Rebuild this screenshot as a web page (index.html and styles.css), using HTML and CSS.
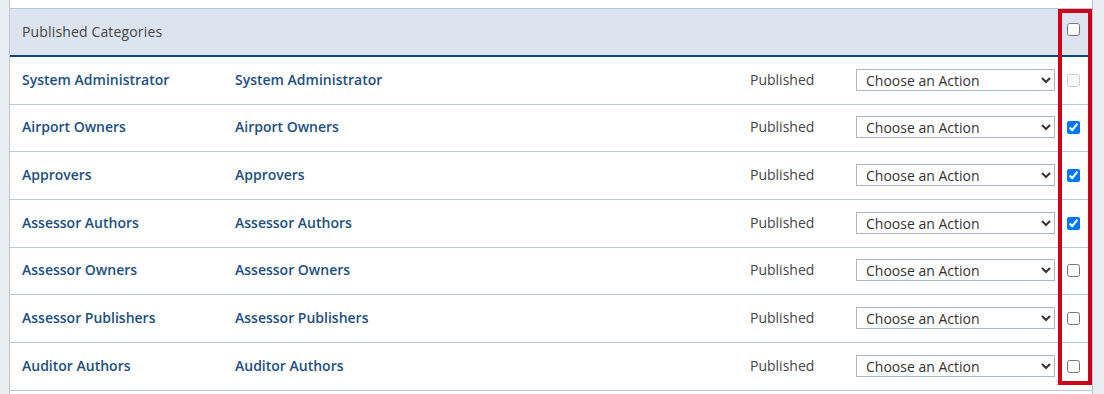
FILE: index.html
```html
<!DOCTYPE html>
<html lang="en">
<head>
<meta charset="utf-8">
<title>Published Categories</title>
<link rel="stylesheet" href="styles.css">
</head>
<body>
<div class="page">
  <div class="panel">
    <div class="head">
      <div class="cell title">Published Categories</div>
      <div class="cell check"><input type="checkbox"></div>
    </div>
    <div class="row">
      <div class="cell name">System Administrator</div>
      <div class="cell name">System Administrator</div>
      <div class="cell status">Published</div>
      <div class="cell act"><select><option>Choose an Action</option></select></div>
      <div class="cell check"><input type="checkbox" disabled></div>
    </div>
    <div class="row">
      <div class="cell name">Airport Owners</div>
      <div class="cell name">Airport Owners</div>
      <div class="cell status">Published</div>
      <div class="cell act"><select><option>Choose an Action</option></select></div>
      <div class="cell check"><input type="checkbox" checked></div>
    </div>
    <div class="row">
      <div class="cell name">Approvers</div>
      <div class="cell name">Approvers</div>
      <div class="cell status">Published</div>
      <div class="cell act"><select><option>Choose an Action</option></select></div>
      <div class="cell check"><input type="checkbox" checked></div>
    </div>
    <div class="row">
      <div class="cell name">Assessor Authors</div>
      <div class="cell name">Assessor Authors</div>
      <div class="cell status">Published</div>
      <div class="cell act"><select><option>Choose an Action</option></select></div>
      <div class="cell check"><input type="checkbox" checked></div>
    </div>
    <div class="row">
      <div class="cell name">Assessor Owners</div>
      <div class="cell name">Assessor Owners</div>
      <div class="cell status">Published</div>
      <div class="cell act"><select><option>Choose an Action</option></select></div>
      <div class="cell check"><input type="checkbox"></div>
    </div>
    <div class="row">
      <div class="cell name">Assessor Publishers</div>
      <div class="cell name">Assessor Publishers</div>
      <div class="cell status">Published</div>
      <div class="cell act"><select><option>Choose an Action</option></select></div>
      <div class="cell check"><input type="checkbox"></div>
    </div>
    <div class="row">
      <div class="cell name">Auditor Authors</div>
      <div class="cell name">Auditor Authors</div>
      <div class="cell status">Published</div>
      <div class="cell act"><select><option>Choose an Action</option></select></div>
      <div class="cell check"><input type="checkbox"></div>
    </div>
  </div>
  <div class="highlight"></div>
</div>
</body>
</html>
```

FILE: styles.css
```css
html, body {
  margin: 0;
  padding: 0;
}
body {
  font-family: "Open Sans", "Noto Sans", sans-serif;
  font-size: 14px;
  color: #444;
}
.page {
  position: relative;
  height: 394px;
  overflow: hidden;
  background: #e9eef3;
  padding: 0 11px 0 9px;
}
.panel {
  background: #fff;
  border-left: 1px solid #b9c7d8;
  border-right: 1px solid #b9c7d8;
  padding-top: 8px;
  height: 100%;
  box-sizing: border-box;
}
.head, .row {
  display: grid;
  grid-template-columns: 213px 515px 106px 211px 37px;
  align-items: center;
}
.head {
  grid-template-columns: 1045px 37px;
  height: 46px;
  background: #dce4ef;
  border-top: 1px solid #b9c7d8;
  border-bottom: 2px solid #0c4a7a;
}
.row {
  height: 46.67px;
  border-bottom: 1px solid #b9c7d8;
}
.cell {
  padding-left: 12px;
  white-space: nowrap;
}
.title, .name, .status {
  padding-bottom: 2px;
}
.title {
  color: #444;
  letter-spacing: 0.15px;
}
.name {
  font-weight: 600;
  color: #1d4f7f;
  letter-spacing: 0;
}
.status {
  color: #444;
}
.act {
  padding-bottom: 1px;
}
.act select {
  width: 199px;
  height: 22px;
  font-family: inherit;
  font-size: 14px;
  color: #333;
  background: #fff;
  border: 1px solid #a9b8c9;
  border-radius: 0;
  padding: 0 0 0 5px;
}
.check {
  display: flex;
  align-items: center;
}
.check input {
  width: 13px;
  height: 13px;
  margin: 0;
}
.head .check input {
  margin-top: -5px;
}
.highlight {
  position: absolute;
  left: 1058px;
  top: 9px;
  width: 26px;
  height: 368px;
  border: 4px solid #d0021b;
}
```
